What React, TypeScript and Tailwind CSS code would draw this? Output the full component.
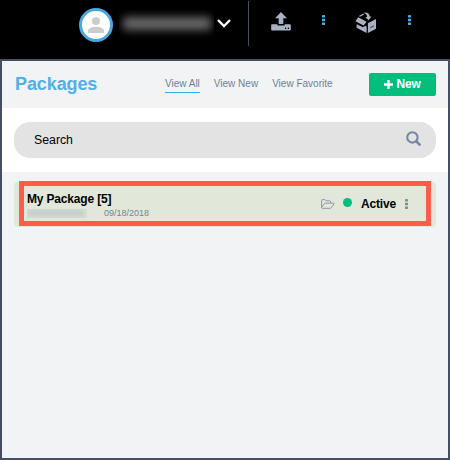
import React from 'react';

function Avatar() {
  return (
    <div className="flex h-[34px] w-[34px] shrink-0 items-center justify-center rounded-full border-[3px] border-[#4aa8e0] bg-white">
      <svg width="16" height="16" viewBox="0 0 16 16" fill="#cccccc">
        <circle cx="8" cy="4" r="4" />
        <path d="M0 16V13.6C0 11 5 9.8 8 9.8s8 1.2 8 3.8V16z" />
      </svg>
    </div>
  );
}

function Dots({ className }: { className: string }) {
  return (
    <svg width="3" height="10" viewBox="0 0 3 10" fill="currentColor" className={className}>
      <rect width="3" height="2.6" rx="0.4" />
      <rect y="3.7" width="3" height="2.6" rx="0.4" />
      <rect y="7.4" width="3" height="2.6" rx="0.4" />
    </svg>
  );
}

function UploadIcon() {
  return (
    <svg width="20" height="20" viewBox="0 0 20 20" className="ml-[22px] mt-3" fill="#a9b2c3">
      <path d="M10 0L16 6.2H12.3V12H7.7V6.2H4z" />
      <path d="M1 12.3H6.4V13.5H13.6V12.3H19Q19.8 12.3 19.8 13.1V17.8Q19.8 18.6 19 18.6H1Q.2 18.6 .2 17.8V13.1Q.2 12.3 1 12.3z" />
      <rect x="14" y="15.6" width="1.2" height="1.4" fill="#000" />
      <rect x="16.8" y="15.6" width="1.2" height="1.4" fill="#000" />
    </svg>
  );
}

function BoxIcon() {
  return (
    <svg width="22" height="22" viewBox="0 0 22 22" className="ml-[30px] mt-3" fill="#a9b2c3">
      <path d="M12.9 11.2L21 7V16.8L12.9 21z" />
      <path d="M15.2 15.1L19 13.2V14.6L15.2 16.5z" fill="#4b5260" />
      <path d="M1.6 12.2L8 15.3L10.2 13.7L11.6 14.4V21L1.6 15.8z" />
      <path d="M3.2 5.2L11.6 9.7L8.6 13.5L.4 9.2z" />
      <path d="M3.9 4L8.3 1.6L9 2.5L5 4.7z" />
      <path d="M9.4 .4C13 .2 14.8 1.9 14.7 4.6H16.5L13.6 8.2L10.2 5H12C12 3.2 11.3 1.8 9.2 1.3z" />
    </svg>
  );
}

function TopBar() {
  return (
    <header className="flex h-[59px] items-start bg-black pl-[79px]">
      <div className="mt-2">
        <Avatar />
      </div>
      <div className="ml-[6px] mt-[10px] flex h-[34px] w-[95px] items-start justify-center overflow-hidden pt-[7px]">
        <div className="h-[13px] w-[88px] rounded-[3px] bg-[#686868] blur-[4px]" />
      </div>
      <svg width="14" height="9" viewBox="0 0 14 9" className="ml-[3px] mt-[19px]" fill="none" stroke="#fff" strokeWidth="2.4">
        <path d="M1 1L7 7L13 1" />
      </svg>
      <div className="ml-[17px] mt-[1px] h-[45px] w-px bg-[#435063]" />
      <UploadIcon />
      <Dots className="ml-[31px] mt-[15px] text-[#50afe4]" />
      <BoxIcon />
      <Dots className="ml-[31px] mt-[15px] text-[#50afe4]" />
    </header>
  );
}

function PackageRow() {
  return (
    <div className="relative flex h-[45px] items-center rounded-[4px] bg-[#e1e8d9] pl-[13px] pr-[28px]">
      <div className="flex flex-col pt-[3px]">
        <span className="text-[12px] font-bold leading-[14px] tracking-[-0.17px] text-black">My Package [5]</span>
        <div className="flex h-[14px] items-center">
          <div className="flex h-[9px] w-[60px] items-center overflow-hidden bg-[#d9e0d5]">
            <div className="h-[6px] w-[57px] bg-[#c0cac9] blur-[2.5px]" />
          </div>
          <span className="ml-[17px] text-[9px] leading-[14px] text-[#748399]">09/18/2018</span>
        </div>
      </div>
      <div className="mb-[2px] ml-auto flex items-center">
        <svg width="14" height="10" viewBox="0 0 14 10" fill="none" stroke="#8c99ac" strokeWidth="1" strokeLinejoin="round">
          <path d="M.6 8.5V1.5Q.6.6 1.5.6H4L5 1.8H8.7Q9.6 1.8 9.6 2.7V4M.6 8.5L3.4 4.6Q3.8 4.1 4.5 4.1H12.5Q13.6 4.1 12.9 5L10.5 8.6Q10 9.3 9.2 9.3H1.5Q.7 9.3 .6 8.5z" />
        </svg>
        <div className="mb-[2px] ml-2 h-[9px] w-[9px] rounded-full bg-[#03bd7d]" />
        <span className="ml-[9px] text-[12px] font-bold leading-[14px] tracking-[-0.15px] text-black">Active</span>
        <Dots className="ml-[9px] text-[#7f8da3]" />
      </div>
      <div className="absolute left-[5px] top-[-1px] h-[45px] w-[412px] border-[5px] border-[#ff5c4c]" />
    </div>
  );
}

export default function App() {
  return (
    <div className="flex h-[460px] w-[450px] flex-col overflow-hidden bg-black font-['Liberation_Sans',Arial,sans-serif]">
      <TopBar />
      <main className="flex flex-1 flex-col border-2 border-[#434f65] bg-[#f1f3f5]">
        <div className="flex h-[47px] items-center pl-[13px] pr-3">
          <h1 className="w-[150px] pb-[2px] text-[18px] font-bold leading-[22px] tracking-[-0.1px] text-[#53afe4]">Packages</h1>
          <nav className="flex items-start gap-[14px] pt-px text-[10px] leading-[14px] text-[#718096]">
            <a className="border-b border-solid border-b-[#3fa9e5] pb-px">View All</a>
            <a>View New</a>
            <a>View Favorite</a>
          </nav>
          <button className="ml-auto flex h-[23px] w-[67px] items-center justify-center gap-[3px] rounded-[2px] bg-[#03bd7d] pb-px text-[12px] font-bold tracking-[-0.2px] text-white">
            <svg width="9" height="9" viewBox="0 0 9 9" fill="none" stroke="#fff" strokeWidth="2.4">
              <path d="M4.5 0V9M0 4.5H9" />
            </svg>
            New
          </button>
        </div>
        <div className="h-16 bg-white px-3 pt-[14px]">
          <div className="flex h-9 items-center justify-between rounded-[16px] bg-[#e3e3e3] pl-5 pr-[15px]">
            <span className="text-[12.3px] text-black">Search</span>
            <svg width="15" height="15" viewBox="0 0 15 15" fill="none" stroke="#7587a2" strokeWidth="2.1" className="mb-[3px]">
              <circle cx="6.4" cy="6.4" r="5.2" />
              <path d="M10 10L14.4 14.4" strokeWidth="2.5" />
            </svg>
          </div>
        </div>
        <div className="px-3 pt-[10px]">
          <PackageRow />
        </div>
      </main>
    </div>
  );
}
